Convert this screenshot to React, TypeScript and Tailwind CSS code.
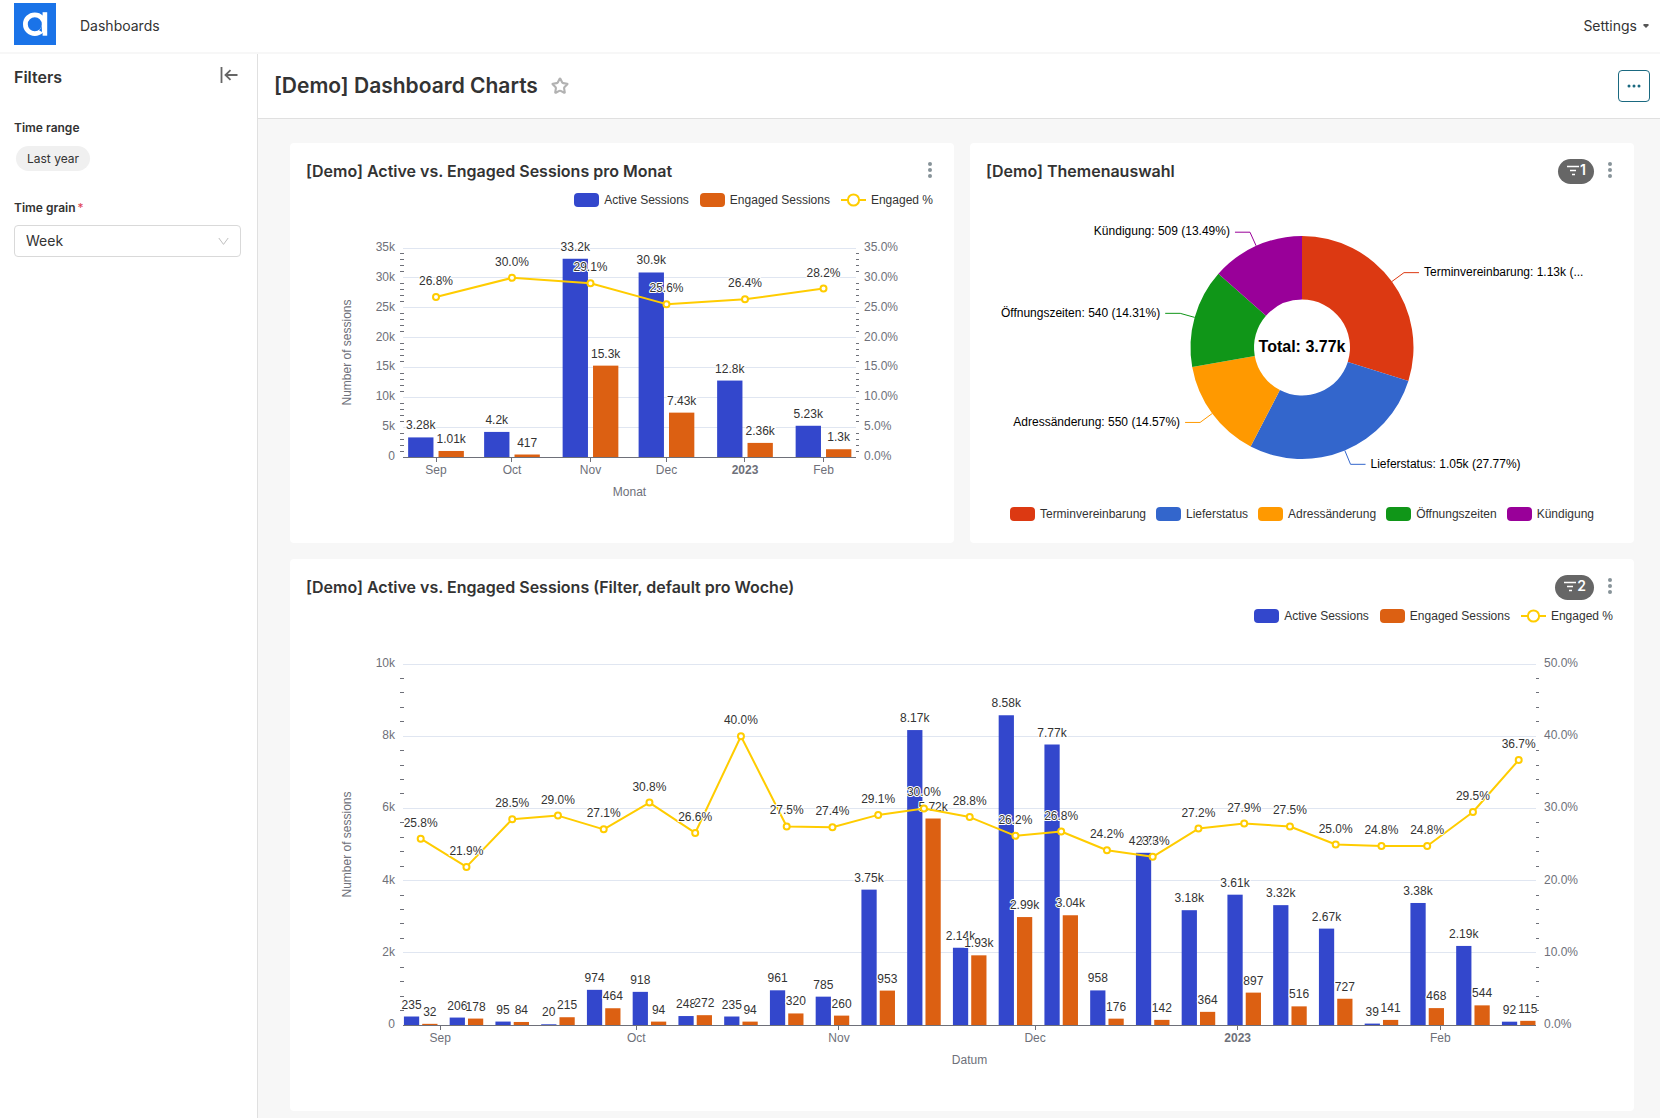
import { Star } from 'lucide-react';

type Point = { x: number; active: number; engaged: number; pct: number };

type Tick = { x: number; label: string; bold?: boolean };

type ComboProps = {
  name: string;
  height: number;
  width: number;
  plot: { left: number; right: number; top: number; bottom: number };
  max: number;
  step: number;
  pctMax: number;
  points: Point[];
  ticks: Tick[];
  xTitle: string;
};

const BLUE = '#3347cc';
const ORANGE = '#dc6012';
const YELLOW = '#ffcc00';

// days since Sep 1
const MONTH_STARTS = [
  { day: 0, label: 'Sep' },
  { day: 30, label: 'Oct' },
  { day: 61, label: 'Nov' },
  { day: 91, label: 'Dec' },
  { day: 122, label: '2023', bold: true },
  { day: 153, label: 'Feb' },
];

const monthTicks = (first: number, last: number): Tick[] =>
  MONTH_STARTS.map((m) => ({ ...m, x: first + ((last - first) * m.day) / 153 }));

const MONTHS = monthTicks(146, 533.5);
const WEEK_TICKS = monthTicks(150.3, 1150.3);

const MONTHLY: Point[] = [
  [3280, 1010, 26.8],
  [4200, 417, 30.0],
  [33200, 15300, 29.1],
  [30900, 7430, 25.6],
  [12800, 2360, 26.4],
  [5230, 1300, 28.2],
].map(([active, engaged, pct], i) => ({ x: MONTHS[i].x, active, engaged, pct }));

const WEEKLY: Point[] = [
  [235, 32, 25.8],
  [206, 178, 21.9],
  [95, 84, 28.5],
  [20, 215, 29.0],
  [974, 464, 27.1],
  [918, 94, 30.8],
  [248, 272, 26.6],
  [235, 94, 40.0],
  [961, 320, 27.5],
  [785, 260, 27.4],
  [3750, 953, 29.1],
  [8170, 5720, 30.0],
  [2140, 1930, 28.8],
  [8580, 2990, 26.2],
  [7770, 3040, 26.8],
  [958, 176, 24.2],
  [4770, 142, 23.3],
  [3180, 364, 27.2],
  [3610, 897, 27.9],
  [3320, 516, 27.5],
  [2670, 727, 25.0],
  [39, 141, 24.8],
  [3380, 468, 24.8],
  [2190, 544, 29.5],
  [92, 115, 36.7],
].map(([active, engaged, pct], i) => ({ x: 130.7 + i * 45.75, active, engaged, pct }));

const TOPICS = [
  { name: 'Terminvereinbarung', value: 1126, label: 'Terminvereinbarung: 1.13k (...', color: '#dc3912' },
  { name: 'Lieferstatus', value: 1048, label: 'Lieferstatus: 1.05k (27.77%)', color: '#3366cc' },
  { name: 'Adressänderung', value: 550, label: 'Adressänderung: 550 (14.57%)', color: '#ff9900' },
  { name: 'Öffnungszeiten', value: 540, label: 'Öffnungszeiten: 540 (14.31%)', color: '#109618' },
  { name: 'Kündigung', value: 509, label: 'Kündigung: 509 (13.49%)', color: '#990099' },
];

const formatCount = (n: number) => (n < 1000 ? String(n) : `${Number((n / 1000).toPrecision(3))}k`);

function ComboChart({ name, width, height, plot, max, step, pctMax, points, ticks, xTitle }: ComboProps) {
  const { left, right, top, bottom } = plot;
  const plotHeight = bottom - top;
  const y = (v: number) => bottom - (v / max) * plotHeight;
  const yPct = (v: number) => bottom - (v / pctMax) * plotHeight;
  const rows = max / step;
  const majors = Array.from({ length: rows + 1 }, (_, i) => i);
  const minors = Array.from({ length: rows * 5 }, (_, i) => i).filter((i) => i % 5 !== 0);
  const barWidth = (points[1].x - points[0].x) / 3;
  const gap = barWidth / 5;
  const activeX = (x: number) => x - gap / 2 - barWidth;
  const engagedX = (x: number) => x + gap / 2;
  const snap = (v: number) => Math.floor(v) + 0.5;

  return (
    <svg
      viewBox={`0 0 ${width} ${height}`}
      className="block w-full h-auto text-xs"
      fontFamily="'Liberation Sans', Arial, sans-serif"
      role="img"
      aria-label={name}
    >
      {majors.map((i) => {
        const ly = snap(y(i * step));
        const labelY = Math.round(y(i * step)) + 3;
        return (
          <g key={i} fill="#6e7079">
            <line x1={left} x2={right} y1={ly} y2={ly} stroke="#e0e6f1" />
            <text x={left - 8} y={labelY} textAnchor="end">
              {formatCount(i * step)}
            </text>
            <text x={right + 8} y={labelY}>
              {((i * pctMax) / rows).toFixed(1)}%
            </text>
          </g>
        );
      })}
      {points.map((p) => (
        <g key={p.x}>
          <rect x={activeX(p.x)} y={y(p.active)} width={barWidth} height={bottom - y(p.active)} fill={BLUE} />
          <rect x={engagedX(p.x)} y={y(p.engaged)} width={barWidth} height={bottom - y(p.engaged)} fill={ORANGE} />
        </g>
      ))}
      <line x1={left} x2={right} y1={snap(bottom)} y2={snap(bottom)} stroke="#6e7079" />
      {ticks.map((t) => (
        <g key={t.label}>
          <line x1={snap(t.x)} x2={snap(t.x)} y1={bottom} y2={bottom + 5} stroke="#6e7079" />
          <text x={t.x} y={bottom + 17} textAnchor="middle" fill="#6e7079" fontWeight={t.bold ? 700 : 400}>
            {t.label}
          </text>
        </g>
      ))}
      <g textAnchor="middle" fill="#333" stroke="#fff" strokeWidth="2" paintOrder="stroke" strokeLinejoin="round">
        {points.map((p) => (
          <text key={p.x} x={activeX(p.x) + barWidth / 2} y={y(p.active) - 8}>
            {formatCount(p.active)}
          </text>
        ))}
        {points.map((p) => (
          <text key={p.x} x={engagedX(p.x) + barWidth / 2} y={y(p.engaged) - 8}>
            {formatCount(p.engaged)}
          </text>
        ))}
      </g>
      <polyline
        points={points.map((p) => `${p.x},${yPct(p.pct)}`).join(' ')}
        fill="none"
        stroke={YELLOW}
        strokeWidth="2"
        strokeLinejoin="bevel"
      />
      {points.map((p) => (
        <circle key={p.x} cx={p.x} cy={yPct(p.pct)} r="3" fill="#fff" stroke={YELLOW} strokeWidth="2" />
      ))}
      <g textAnchor="middle" fill="#333" stroke="#fff" strokeWidth="2" paintOrder="stroke" strokeLinejoin="round">
        {points.map((p) => (
          <text key={p.x} x={p.x} y={yPct(p.pct) - 12}>
            {p.pct.toFixed(1)}%
          </text>
        ))}
      </g>
      {minors.map((i) => {
        const ly = snap(y((i * step) / 5));
        return <path key={i} d={`M${left - 3} ${ly}h4M${right} ${ly}h3`} stroke="#6e7079" />;
      })}
      <text x={(left + right) / 2} y={bottom + 39} textAnchor="middle" fill="#6e7079">
        {xTitle}
      </text>
      <text
        transform={`translate(61 ${(top + bottom) / 2}) rotate(-90)`}
        textAnchor="middle"
        fill="#6e7079"
      >
        Number of sessions
      </text>
    </svg>
  );
}

function DonutChart() {
  const cx = 332;
  const cy = 131.5;
  const outer = 111.5;
  const inner = 48;
  const total = TOPICS.reduce((sum, t) => sum + t.value, 0);
  const at = (r: number, a: number) => [cx + r * Math.sin(a), cy - r * Math.cos(a)];

  let angle = 0;
  const slices = TOPICS.map((t) => {
    const start = angle;
    angle += (t.value / total) * Math.PI * 2;
    return { ...t, start, end: angle, mid: (start + angle) / 2 };
  });

  return (
    <svg
      viewBox="0 0 664 286"
      className="block w-full h-auto text-xs"
      fontFamily="'Liberation Sans', Arial, sans-serif"
      role="img"
      aria-label="Themenauswahl"
    >
      {slices.map((s) => {
        const [x1, y1] = at(outer, s.start);
        const [x2, y2] = at(outer, s.end);
        const [x3, y3] = at(inner, s.end);
        const [x4, y4] = at(inner, s.start);
        const [lx, ly] = at(outer, s.mid);
        const [kx, ky] = at(outer + 15, s.mid);
        const dir = kx > cx ? 1 : -1;
        return (
          <g key={s.name}>
            <path
              d={`M${x1} ${y1}A${outer} ${outer} 0 0 1 ${x2} ${y2}L${x3} ${y3}A${inner} ${inner} 0 0 0 ${x4} ${y4}Z`}
              fill={s.color}
            />
            <polyline points={`${lx},${ly} ${kx},${ky} ${kx + dir * 15},${ky}`} fill="none" stroke={s.color} />
            <text x={kx + dir * 20} y={Math.round(ky + 3.2)} textAnchor={dir > 0 ? 'start' : 'end'}>
              {s.label}
            </text>
          </g>
        );
      })}
      <text x={cx} y={136} textAnchor="middle" className="text-base font-bold">
        Total: 3.77k
      </text>
    </svg>
  );
}

function Swatch({ color }: { color: string }) {
  return <span className="h-3.5 w-[25px] rounded" style={{ backgroundColor: color }} />;
}

function SessionsLegend() {
  return (
    <ul className="flex h-6 items-center justify-end gap-[11px] pr-[21px] font-['Liberation_Sans',Arial,sans-serif] text-xs text-[#333]">
      <li className="flex items-center gap-[5px]">
        <Swatch color={BLUE} />
        Active Sessions
      </li>
      <li className="flex items-center gap-[5px]">
        <Swatch color={ORANGE} />
        Engaged Sessions
      </li>
      <li className="flex items-center gap-[5px]">
        <svg width="25" height="14" viewBox="0 0 25 14" aria-hidden="true">
          <path d="M0 7h25" stroke={YELLOW} strokeWidth="2" />
          <circle cx="12.5" cy="7" r="5.6" fill="#fff" stroke={YELLOW} strokeWidth="2" />
        </svg>
        Engaged %
      </li>
    </ul>
  );
}

function TopicsLegend() {
  return (
    <ul className="flex h-6 items-center justify-center gap-2.5 font-['Liberation_Sans',Arial,sans-serif] text-xs text-[#333]">
      {TOPICS.map((t) => (
        <li key={t.name} className="flex items-center gap-[5px]">
          <Swatch color={t.color} />
          {t.name}
        </li>
      ))}
    </ul>
  );
}

function CardHeader({ title, filters }: { title: string; filters?: number }) {
  return (
    <div className="flex h-[45px] items-start justify-between pt-4 pl-4 pr-5">
      <h2 className="text-base font-semibold leading-6">{title}</h2>
      <div className="flex items-start gap-3">
        {filters && (
          <button
            type="button"
            aria-label={`${filters} applied filters`}
            className="flex h-[25px] items-center rounded-full bg-[#666] px-2 pb-[3px] text-sm font-semibold text-white"
          >
            <svg width="14" height="14" viewBox="0 0 14 14" aria-hidden="true">
              <path d="M1 3.5h12M4 7.5h6M6 11.5h3" stroke="#fff" strokeWidth="1.3" />
            </svg>
            {filters}
          </button>
        )}
        <button type="button" aria-label="More options" className="pt-[3px]">
          <svg width="8" height="16" viewBox="0 0 8 16" fill="#879399" aria-hidden="true">
            <circle cx="4" cy="2" r="2" />
            <circle cx="4" cy="8" r="2" />
            <circle cx="4" cy="14" r="2" />
          </svg>
        </button>
      </div>
    </div>
  );
}

function TopBar() {
  return (
    <header className="flex h-[54px] items-center justify-between border-b-2 border-[#f7f7f7] pr-[11px] pl-[14px]">
      <nav className="flex items-center gap-6">
        <a href="#" aria-label="Home" className="-mt-1">
          <svg width="42" height="42" viewBox="0 0 42 42" aria-hidden="true">
            <rect width="42" height="42" fill="#1a73e8" />
            <circle cx="20.8" cy="21.2" r="9.4" fill="none" stroke="#fff" strokeWidth="4.8" />
            <path d="M28.600 9.200h4.600v23.500h-4.600z" fill="#fff" />
            <path d="M27.600 21c0 3-.8 4.800-2.600 6.300l3 1.600z" fill="#1a73e8" />
          </svg>
        </a>
        <a href="#" className="text-sm">
          Dashboards
        </a>
      </nav>
      <button type="button" className="flex items-center gap-1.5 text-sm">
        Settings
        <svg width="6" height="4" viewBox="0 0 6 4" aria-hidden="true">
          <path d="M.5 0h5v1.500L3 4 .5 1.500z" fill="#555" />
        </svg>
      </button>
    </header>
  );
}

function Sidebar() {
  return (
    <aside className="w-[258px] shrink-0 border-r border-[#e0e0e0] pt-[11px] pr-4 pl-[14px]">
      <div className="flex items-start justify-between">
        <h2 className="text-base font-semibold leading-6">Filters</h2>
        <button type="button" aria-label="Collapse filters" className="mr-[3px] pt-0.5">
          <svg width="18" height="16" viewBox="0 0 18 16" fill="none" stroke="#666" strokeWidth="1.8" aria-hidden="true">
            <path d="M1.500 0v16M17.500 8H6M10.500 3.200L5.500 8l5 4.800" />
          </svg>
        </button>
      </div>
      <h3 className="mt-[29px] text-xs font-semibold leading-5">Time range</h3>
      <button type="button" className="mt-2 ml-0.5 block h-[25px] rounded-full bg-[#f0f0f0] px-[11px] text-xs">
        Last year
      </button>
      <label htmlFor="grain" className="mt-[27px] block text-xs font-semibold leading-5">
        Time grain
        <span className="pl-0.5 font-normal text-[#e04355]">*</span>
      </label>
      <div className="relative mt-[7px]">
        <select
          id="grain"
          className="block h-8 w-full appearance-none rounded border border-[#d9d9d9] bg-white px-[11px] text-sm"
        >
          <option>Week</option>
        </select>
        <svg
          className="pointer-events-none absolute top-3 right-3"
          width="11"
          height="9"
          viewBox="0 0 11 9"
          fill="none"
          stroke="#bfbfbf"
          aria-hidden="true"
        >
          <path d="M.8 1l4.700 6.400L10.200 1" />
        </svg>
      </div>
    </aside>
  );
}

export default function App() {
  return (
    <div className="flex min-h-screen flex-col bg-white font-[Inter,sans-serif] text-[#333]">
      <TopBar />
      <div className="flex flex-1">
        <Sidebar />
        <main className="flex min-w-0 flex-1 flex-col bg-[#f7f7f7]">
          <div className="flex h-[65px] items-center justify-between border-b border-[#e0e0e0] bg-white pr-[10px] pl-4">
            <div className="flex items-center gap-[13px]">
              <h1 className="text-[21px] font-semibold">[Demo] Dashboard Charts</h1>
              <button type="button" aria-label="Favorite">
                <Star className="size-[18px] text-[#b2b2b2]" strokeWidth={2.8} strokeLinejoin="miter" />
              </button>
            </div>
            <button
              type="button"
              aria-label="Dashboard menu"
              className="flex size-8 items-center justify-center rounded border border-[#1a6980]"
            >
              <svg width="14" height="4" viewBox="0 0 14 4" fill="#1a6980" aria-hidden="true">
                <circle cx="2" cy="2" r="1.5" />
                <circle cx="7" cy="2" r="1.5" />
                <circle cx="12" cy="2" r="1.5" />
              </svg>
            </button>
          </div>
          <div className="grid grid-cols-2 gap-4 pt-6 pr-[26px] pb-[6px] pl-8">
            <section className="rounded bg-white">
              <CardHeader title="[Demo] Active vs. Engaged Sessions pro Monat" />
              <SessionsLegend />
              <ComboChart
                name="Active vs. Engaged Sessions pro Monat"
                width={664}
                height={331}
                plot={{ left: 113, right: 566, top: 36, bottom: 245 }}
                max={35000}
                step={5000}
                pctMax={35}
                points={MONTHLY}
                ticks={MONTHS}
                xTitle="Monat"
              />
            </section>
            <section className="rounded bg-white">
              <CardHeader title="[Demo] Themenauswahl" filters={1} />
              <div className="pt-[28px]">
                <DonutChart />
              </div>
              <TopicsLegend />
            </section>
            <section className="col-span-2 rounded bg-white">
              <CardHeader title="[Demo] Active vs. Engaged Sessions (Filter, default pro Woche)" filters={2} />
              <SessionsLegend />
              <ComboChart
                name="Active vs. Engaged Sessions"
                width={1344}
                height={483}
                plot={{ left: 113, right: 1246, top: 36, bottom: 397 }}
                max={10000}
                step={2000}
                pctMax={50}
                points={WEEKLY}
                ticks={WEEK_TICKS}
                xTitle="Datum"
              />
            </section>
          </div>
        </main>
      </div>
    </div>
  );
}
